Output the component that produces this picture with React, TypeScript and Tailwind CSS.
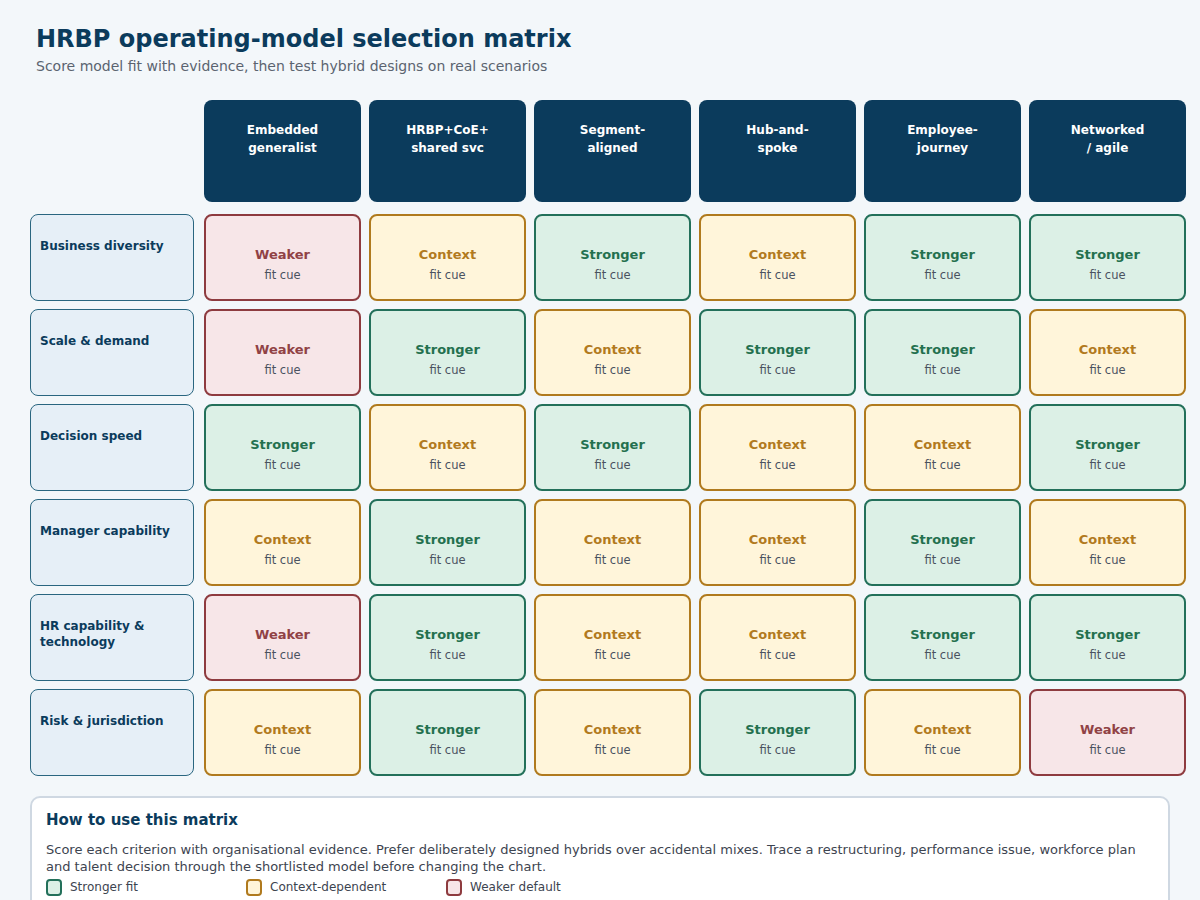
import React from "react";

type Fit = "S" | "C" | "W";

const cols = [
  ["Embedded", "generalist"],
  ["HRBP+CoE+", "shared svc"],
  ["Segment-", "aligned"],
  ["Hub-and-", "spoke"],
  ["Employee-", "journey"],
  ["Networked", "/ agile"],
];

const rows: { label: string; fits: Fit[] }[] = [
  { label: "Business diversity", fits: ["W", "C", "S", "C", "S", "S"] },
  { label: "Scale & demand", fits: ["W", "S", "C", "S", "S", "C"] },
  { label: "Decision speed", fits: ["S", "C", "S", "C", "C", "S"] },
  { label: "Manager capability", fits: ["C", "S", "C", "C", "S", "C"] },
  { label: "HR capability & technology", fits: ["W", "S", "C", "C", "S", "S"] },
  { label: "Risk & jurisdiction", fits: ["C", "S", "C", "S", "C", "W"] },
];

function FitCell({ f }: { f: Fit }) {
  const cls =
    f === "S"
      ? "bg-[#dcf0e6] border-[#23705a] text-[#24704f]"
      : f === "C"
      ? "bg-[#fff5da] border-[#b07a1e] text-[#b27a1e]"
      : "bg-[#f7e6e8] border-[#8e3b3f] text-[#904245]";
  const label = f === "S" ? "Stronger" : f === "C" ? "Context" : "Weaker";
  return (
    <div className={`rounded-[8px] border-2 flex flex-col items-center justify-center pt-[14px] ${cls}`}>
      <div className="text-[13px] font-bold leading-[18px]">{label}</div>
      <div className="text-[11.5px] leading-[16px] text-[#4a5260] mt-[3px]">fit cue</div>
    </div>
  );
}

export default function App() {
  return (
    <div
      className="w-[1200px] h-[900px] overflow-hidden bg-[#f3f7fa]"
      style={{ fontFamily: '"DejaVu Sans", sans-serif' }}
    >
      <div className="pt-[24px] px-[36px]">
        <h1 className="text-[24px] font-bold leading-[30px] text-[#0b3b5c]">
          HRBP operating-model selection matrix
        </h1>
        <p className="text-[14px] leading-[18px] text-[#5b6470] mt-[3px]">
          Score model fit with evidence, then test hybrid designs on real scenarios
        </p>
      </div>

      <div className="pl-[30px] mt-[25px]">
        <div className="grid grid-cols-[166px_repeat(6,157px)] gap-x-[8px] h-[102px]">
          <div />
          {cols.map((c, i) => (
            <div
              key={i}
              className="rounded-[8px] bg-[#0b3b5c] text-white text-[12px] font-bold leading-[18px] text-center pt-[21px]"
            >
              <div>{c[0]}</div>
              <div>{c[1]}</div>
            </div>
          ))}
        </div>
        <div className="grid grid-cols-[166px_repeat(6,157px)] gap-x-[8px] auto-rows-[87px] gap-y-[8px] mt-[12px]">
          {rows.map((r, ri) => (
            <React.Fragment key={ri}>
              <div className="w-[164px] rounded-[8px] border border-[#2a6680] bg-[#e6eff7] text-[12px] font-bold leading-[16px] text-[#0b3b5c] px-[9px] pt-[23px]">
                {r.label}
              </div>
              {r.fits.map((f, fi) => (
                <FitCell key={fi} f={f} />
              ))}
            </React.Fragment>
          ))}
        </div>
      </div>

      <div className="mx-[30px] w-[1140px] mt-[20px] rounded-[10px] border-2 border-[#cfd8e2] bg-white px-[14px] pt-[12px] pb-[20px]">
        <h2 className="text-[15px] font-bold leading-[20px] text-[#0b3b5c]">How to use this matrix</h2>
        <p className="text-[13px] leading-[17px] text-[#3d4450] mt-[11px]">
          Score each criterion with organisational evidence. Prefer deliberately designed hybrids over accidental mixes. Trace a restructuring, performance issue, workforce plan and talent decision through the shortlisted model before changing the chart.
        </p>
        <div className="flex mt-[4px] text-[12px] leading-[17px] text-[#3d4450]">
          <div className="w-[200px] flex items-center gap-[8px]">
            <span className="w-[16px] h-[17px] rounded-[4px] border-2 border-[#23705a] bg-[#dcf0e6]" />
            Stronger fit
          </div>
          <div className="w-[200px] flex items-center gap-[8px]">
            <span className="w-[16px] h-[17px] rounded-[4px] border-2 border-[#b07a1e] bg-[#fff5da]" />
            Context-dependent
          </div>
          <div className="w-[200px] flex items-center gap-[8px]">
            <span className="w-[16px] h-[17px] rounded-[4px] border-2 border-[#8e3b3f] bg-[#f7e6e8]" />
            Weaker default
          </div>
        </div>
      </div>
    </div>
  );
}
